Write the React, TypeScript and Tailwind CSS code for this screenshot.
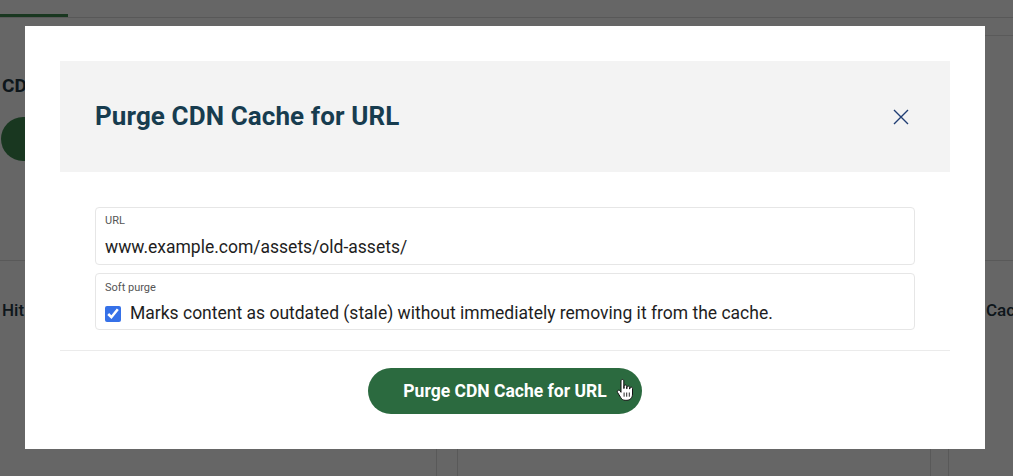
import React from "react";

function HandCursor() {
    return (
        <svg width="18" height="25" viewBox="0 0 18 24" className="absolute left-[248px] top-[10px]">
            <path
                d="M5 2.5c0-.9.6-1.5 1.4-1.5s1.4.6 1.4 1.5V10l.3-.1V7.8c0-.8.6-1.3 1.3-1.3s1.3.5 1.3 1.3v2.4h.3V8.9c0-.8.6-1.3 1.3-1.3s1.3.5 1.3 1.3v1.6h.3v-.6c0-.8.6-1.3 1.3-1.3s1.3.5 1.3 1.3v5.6c0 3.6-2.3 6.3-5.6 6.3H9.2c-2 0-3.3-.9-4.4-2.6L1.6 14c-.5-.8-.3-1.7.4-2.1.7-.4 1.6-.2 2.1.5L5 13.8V2.5z"
                fill="#fff"
                stroke="#111"
                strokeWidth="1"
                strokeLinejoin="round"
            />
            <path d="M8.1 14v4.2M10.7 14v4.2M13.3 14v4.2" stroke="#111" strokeWidth="0.9" />
        </svg>
    );
}

function BackgroundPage() {
    return (
        <div className="flex flex-col w-full h-full">
            <div className="flex h-[18px] border-b border-[#dcdcdc] shrink-0">
                <div className="w-[68px] border-b-[3px] border-[#3f8a52]"></div>
            </div>
            <div className="flex border-b border-[#e2e2e2] h-[18px] ml-[985px]"></div>
            <div className="pl-[2px] pt-[36px] text-[19px] font-bold text-[#243845]">CDN Cache</div>
            <div className="mt-[16px] ml-[1px] w-[200px] h-[44px] rounded-full bg-[#3f8a52]"></div>
            <div className="mt-[99px] border-t border-[#dedede]"></div>
            <div className="flex flex-1 -ml-[20px]">
                <div className="w-[457px] shrink-0 border-r border-[#dedede] pl-[22px] pt-[37px] text-[17px] font-medium text-[#243845]">Hit ratio</div>
                <div className="w-[474px] shrink-0 ml-[20px] border-x border-[#dedede]"></div>
                <div className="w-[100px] shrink-0 ml-[17px] border-l border-[#dedede] pl-[37px] pt-[37px] text-[17px] font-medium text-[#243845] whitespace-nowrap">Cache size</div>
            </div>
        </div>
    );
}

export default function App() {
    return (
        <div className="relative w-full h-[476px] overflow-hidden bg-white font-['Roboto',sans-serif]">
            <BackgroundPage />
            <div className="absolute inset-0 bg-black/60 pl-[25px] pt-[26px]">
                <div className="w-[960px] h-[423px] bg-white p-[35px] flex flex-col">
                    <div className="h-[112px] bg-[#f3f3f3] flex items-center justify-between pl-[35px] pr-[41px]">
                        <h2 className="text-[26px] font-bold text-[#173c4f] tracking-[0.1px]">Purge CDN Cache for URL</h2>
                        <button className="w-4 h-4 flex items-center justify-center">
                            <svg width="16" height="16" viewBox="0 0 16 16">
                                <path d="M1 1L15 15M15 1L1 15" stroke="#1f3d73" strokeWidth="1.4" />
                            </svg>
                        </button>
                    </div>
                    <div className="px-[35px] pt-[35px] pb-[20px] flex flex-col gap-[8px] border-b border-[#ebebeb]">
                        <div className="h-[58px] border border-[#e6e6e6] rounded-[4px] px-[9px] pt-[6px]">
                            <div className="text-[11px] leading-[13px] text-[#555]">URL</div>
                            <div className="mt-[10px] text-[17.5px] leading-[21px] text-[#1e1e1e]">www.example.com/assets/old-assets/</div>
                        </div>
                        <div className="h-[57px] border border-[#e6e6e6] rounded-[4px] px-[9px] pt-[7px]">
                            <div className="text-[11px] leading-[13px] text-[#555]">Soft purge</div>
                            <label className="mt-[9px] flex items-center gap-[9px] text-[17.5px] leading-[21px] text-[#1e1e1e]">
                                <input type="checkbox" defaultChecked className="w-4 h-4 accent-[#3671e8]" />
                                Marks content as outdated (stale) without immediately removing it from the cache.
                            </label>
                        </div>
                    </div>
                    <div className="flex justify-center pt-[17px]">
                        <button className="relative h-[46px] px-[35px] rounded-full bg-[#2b6a3f] text-white text-[17.5px] font-bold">
                            Purge CDN Cache for URL
                            <HandCursor />
                        </button>
                    </div>
                </div>
            </div>
        </div>
    );
}
